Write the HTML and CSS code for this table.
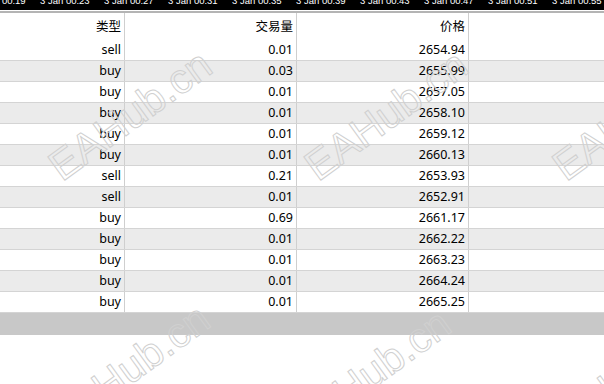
FILE: index.html
```html
<!DOCTYPE html>
<html>
<head>
<meta charset="utf-8">
<link rel="stylesheet" href="styles.css">
</head>
<body>
<div class="page">
  <div class="axis">
    <span class="tick">3 Jan 00:19</span>
    <span class="tick">3 Jan 00:23</span>
    <span class="tick">3 Jan 00:27</span>
    <span class="tick">3 Jan 00:31</span>
    <span class="tick">3 Jan 00:35</span>
    <span class="tick">3 Jan 00:39</span>
    <span class="tick">3 Jan 00:43</span>
    <span class="tick">3 Jan 00:47</span>
    <span class="tick">3 Jan 00:51</span>
    <span class="tick">3 Jan 00:55</span>
  </div>
  <div class="splitter"></div>
  <div class="grid">
    <div class="row head">
      <div class="cell">类型</div><div class="cell">交易量</div><div class="cell">价格</div><div class="fill"></div>
    </div>
    <div class="row"><div class="cell">sell</div><div class="cell">0.01</div><div class="cell">2654.94</div><div class="fill"></div></div>
    <div class="row alt"><div class="cell">buy</div><div class="cell">0.03</div><div class="cell">2655.99</div><div class="fill"></div></div>
    <div class="row"><div class="cell">buy</div><div class="cell">0.01</div><div class="cell">2657.05</div><div class="fill"></div></div>
    <div class="row alt"><div class="cell">buy</div><div class="cell">0.01</div><div class="cell">2658.10</div><div class="fill"></div></div>
    <div class="row"><div class="cell">buy</div><div class="cell">0.01</div><div class="cell">2659.12</div><div class="fill"></div></div>
    <div class="row alt"><div class="cell">buy</div><div class="cell">0.01</div><div class="cell">2660.13</div><div class="fill"></div></div>
    <div class="row"><div class="cell">sell</div><div class="cell">0.21</div><div class="cell">2653.93</div><div class="fill"></div></div>
    <div class="row alt"><div class="cell">sell</div><div class="cell">0.01</div><div class="cell">2652.91</div><div class="fill"></div></div>
    <div class="row"><div class="cell">buy</div><div class="cell">0.69</div><div class="cell">2661.17</div><div class="fill"></div></div>
    <div class="row alt"><div class="cell">buy</div><div class="cell">0.01</div><div class="cell">2662.22</div><div class="fill"></div></div>
    <div class="row"><div class="cell">buy</div><div class="cell">0.01</div><div class="cell">2663.23</div><div class="fill"></div></div>
    <div class="row alt"><div class="cell">buy</div><div class="cell">0.01</div><div class="cell">2664.24</div><div class="fill"></div></div>
    <div class="row"><div class="cell">buy</div><div class="cell">0.01</div><div class="cell">2665.25</div><div class="fill"></div></div>
  </div>
  <div class="footer"></div>

  <span class="wm wm1">EAHub.cn</span>
  <span class="wm wm2">EAHub.cn</span>
  <span class="wm wm3">EAHub.cn</span>
  <span class="wm wm4">EAHub.cn</span>
  <span class="wm wm5">EAHub.cn</span>
  <span class="wm wm6">EAHub.cn</span>
</div>
</body>
</html>
```
FILE: styles.css
```css
html, body {
  margin: 0;
  padding: 0;
  background: #fff;
}
.page {
  position: relative;
  width: 604px;
  height: 384px;
  overflow: hidden;
  font-family: "Noto Sans", "Noto Sans CJK SC", sans-serif;
  font-size: 12.5px;
  color: #000;
}
.axis {
  height: 10px;
  background: #000;
  overflow: hidden;
  display: flex;
  margin-left: -24px;
  white-space: nowrap;
}
.tick {
  flex: 0 0 64px;
  color: #fff;
  font-family: "Liberation Sans", sans-serif;
  font-size: 9.5px;
  line-height: 10px;
  margin-top: -4px;
}
.splitter {
  height: 2px;
  margin-top: 1px;
  background: #b4b4b4;
}
.grid {
  display: flex;
  flex-direction: column;
}
.row {
  display: grid;
  grid-template-columns: 125px 172px 172px 1fr;
  height: 21px;
  box-sizing: border-box;
  border-bottom: 1px solid #d4d4d4;
  background: #fff;
}
.row.alt {
  background: #ebebeb;
}
.row.head {
  height: 27px;
  border-bottom: none;
  align-items: center;
}
.row.head .cell {
  padding-top: 2px;
}
.cell {
  display: flex;
  align-items: center;
  justify-content: flex-end;
  padding-right: 3px;
  border-right: 1px solid #cfcfcf;
  line-height: 1;
  height: 100%;
  box-sizing: border-box;
}
.footer {
  height: 22px;
  background: #c8c8c8;
}
.wm {
  position: absolute;
  font-family: "Liberation Sans", sans-serif;
  font-size: 42px;
  line-height: 42px;
  color: transparent;
  -webkit-text-stroke: 1px #d0d0d0;
  transform: rotate(-36deg);
  transform-origin: 0 100%;
  white-space: nowrap;
  pointer-events: none;
}
.wm1 { left: 66px; top: 146px; }
.wm2 { left: 322px; top: 146px; }
.wm3 { left: 570px; top: 146px; }
.wm4 { left: 64px; top: 400px; }
.wm5 { left: 305px; top: 405px; }
.wm6 { left: 570px; top: 400px; }
```
